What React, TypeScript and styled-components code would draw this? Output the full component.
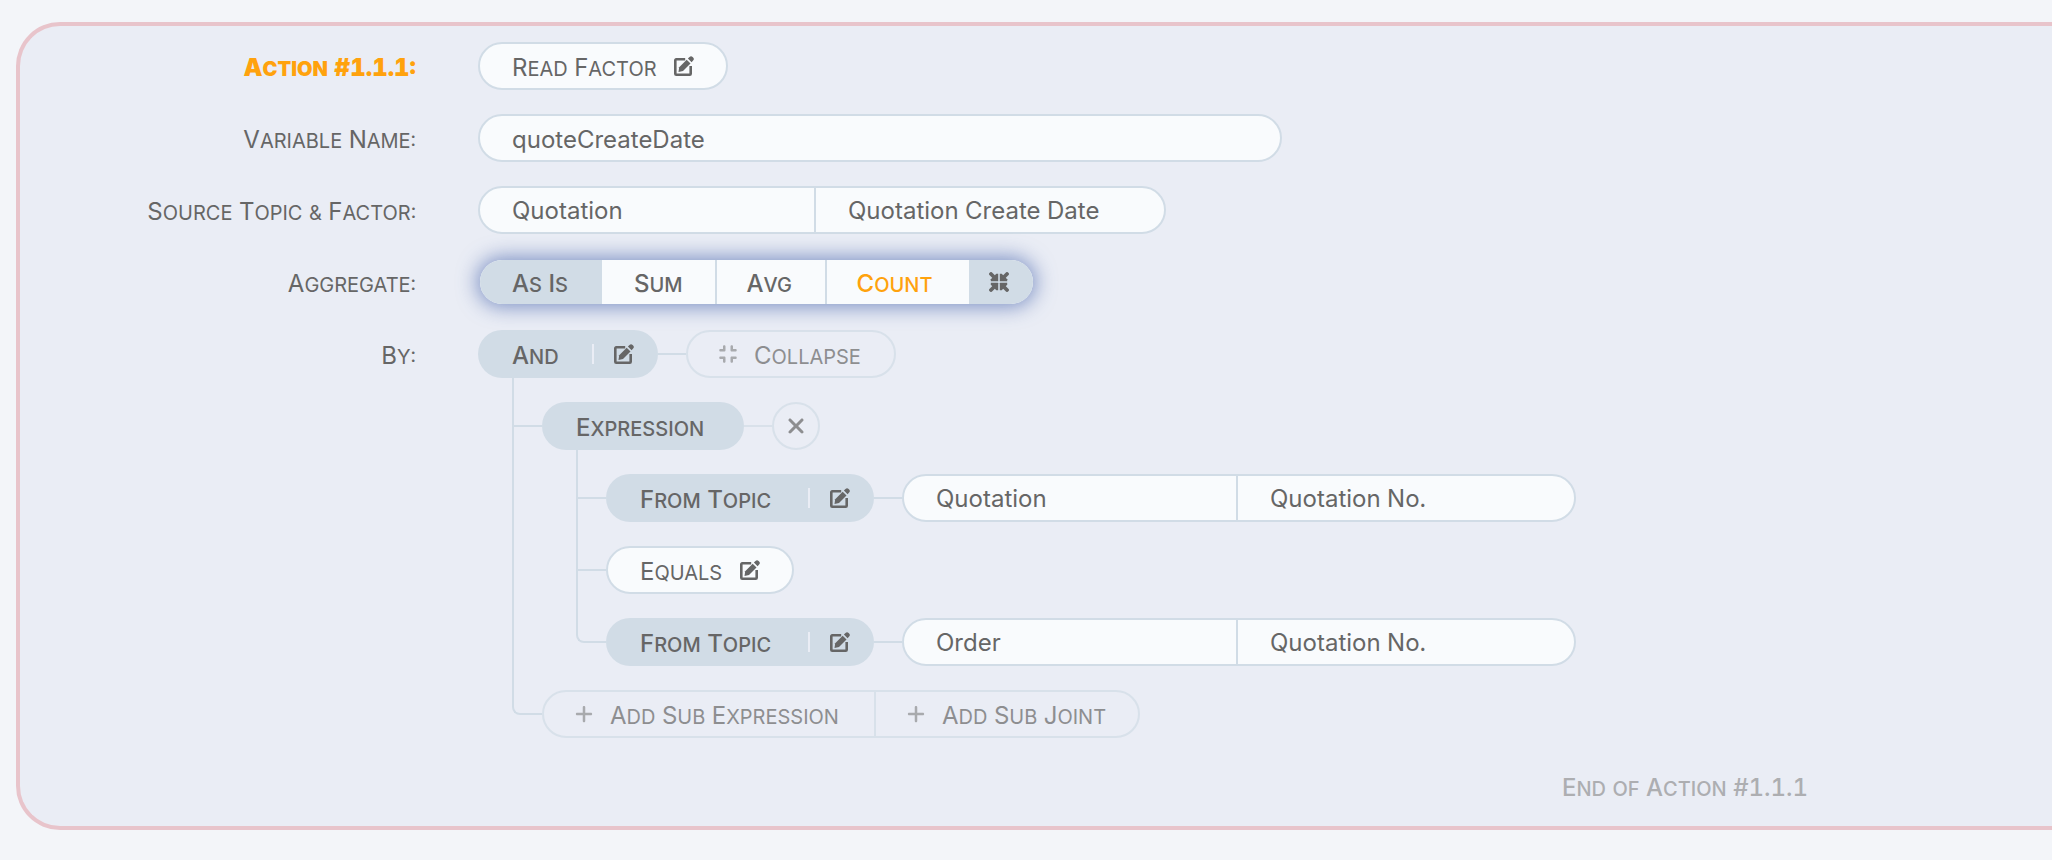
import React from 'react';
import styled, { createGlobalStyle, css } from 'styled-components';
import { FaCompress, FaPlus, FaXmark } from 'react-icons/fa6';

const line = '#d1dce6';
const ink = '#666666';
const amber = '#ffa20d';
const field = '#f9fbfd';

const GlobalStyle = createGlobalStyle`
  *, *::before, *::after { box-sizing: border-box; }
  body {
    margin: 0;
    background: #f3f5f9;
    color: ${ink};
    font-family: Inter, "Liberation Sans", sans-serif;
    font-size: 24px;
    line-height: 28px;
    font-variant-numeric: tabular-nums;
  }
  button, input { font: inherit; color: inherit; }
  button { cursor: pointer; }
`;

const Card = styled.section`
  margin: 22px 0 30px 16px;
  padding: 16px 0;
  border: 4px solid #e8c4cb;
  border-right: 0;
  border-radius: 44px 0 0 44px;
  background: #eaedf5;
`;

const Form = styled.div`
  display: grid;
  grid-template-columns: 396px minmax(0, 1fr);
  column-gap: 62px;
  row-gap: 24px;
  max-width: 1788px;
`;

const Label = styled.label<{ $lead?: boolean }>`
  display: flex;
  align-items: center;
  justify-content: flex-end;
  height: 48px;
  ${p => p.$lead && css`color: ${amber}; font-weight: 900;`}
`;

const Line = styled.div`
  display: flex;
  align-items: center;
  height: 48px;
`;

const CapsText = styled.span`
  padding-top: 4px;
  white-space: nowrap;
`;

const Word = styled.span<{ $initial: boolean }>`
  display: inline-block;
  font-size: 20px;
  text-transform: uppercase;
  ${p => p.$initial && css`&::first-letter { font-size: 24px; }`}
`;

/* Small capitals: every word is set small, its capital initial at full size. */
const Caps = ({ children }: { children: string }) => (
  <CapsText>
    {children.split(' ').map((word, i) => (
      <React.Fragment key={i}>
        {i > 0 && ' '}
        {word.startsWith('#') ? word : <Word $initial={/^[A-Z]/.test(word)}>{word}</Word>}
      </React.Fragment>
    ))}
  </CapsText>
);

const EditIcon = () => (
  <svg width="20" height="20" viewBox="0 0 20 20" fill="currentColor" aria-hidden="true">
    <path
      d="M11.2 3.3H2.2a.9.9 0 0 0-.9.9V17.800a.9.9 0 0 0 .9.9H15.800a.9.9 0 0 0 .9-.9V10"
      fill="none"
      stroke="currentColor"
      strokeWidth="2.600"
    />
    <path d="M4.500 15.900L5.200 11.200L12.700 3.700L16.500 7.500L9 15Z" />
    <path d="M13.900 2.500L15.500.9a2.200 2.200 0 0 1 3.100 0l.5.5a2.200 2.200 0 0 1 0 3.100L17.600 6.200Z" />
  </svg>
);

const ShrinkIcon = () => (
  <svg width="20" height="20" viewBox="0 0 20 20" fill="currentColor" aria-hidden="true">
    {[0, 90, 180, 270].map(angle => (
      <g key={angle} transform={`rotate(${angle} 10 10)`}>
        <path d="M9.200 1.800V8.700a.5.5 0 0 1-.5.5H1.800V7.300L7.300 1.800Z" />
        <path d="M2 2L6 6" stroke="currentColor" strokeWidth="3.800" strokeLinecap="round" />
      </g>
    ))}
  </svg>
);

const PillButton = styled.button<{ $width: number }>`
  display: flex;
  align-items: center;
  justify-content: space-between;
  gap: 16px;
  min-width: ${p => p.$width}px;
  height: 48px;
  padding: 0 32px;
  border: 2px solid ${line};
  border-radius: 24px;
  background: ${field};
`;

const GhostGroup = styled.div`
  display: flex;
  height: 48px;
  border: 2px solid ${line};
  border-radius: 24px;
  opacity: 0.7;
`;

const GhostButton = styled.button<{ $width: number }>`
  display: flex;
  align-items: center;
  gap: 16px;
  min-width: ${p => p.$width}px;
  padding: 0 30px;
  border: 0;
  background: none;
  & + & { border-left: 2px solid ${line}; }
  svg { opacity: 0.7; }
`;

const RoundButton = styled.button`
  display: flex;
  align-items: center;
  justify-content: center;
  width: 48px;
  height: 48px;
  padding: 0;
  border: 2px solid ${line};
  border-radius: 24px;
  background: none;
  opacity: 0.7;
`;

const SolidPill = styled.div<{ $width: number }>`
  display: flex;
  align-items: center;
  justify-content: space-between;
  min-width: ${p => p.$width}px;
  height: 48px;
  padding: 0 2px 0 34px;
  border-radius: 24px;
  background: ${line};
  font-weight: 500;
`;

const SolidName = styled.span`
  display: flex;
  padding-right: 32px;
`;

const EditButton = styled.button`
  display: flex;
  align-items: center;
  height: 20px;
  padding: 0 22px 0 20px;
  border: 0;
  border-left: 2px solid #eaedf5;
  background: none;
`;

const Link = styled.span<{ $faint?: boolean }>`
  width: 28px;
  height: 2px;
  background: ${line};
  opacity: ${p => (p.$faint ? 0.7 : 1)};
`;

const NameInput = styled.input`
  width: 804px;
  height: 48px;
  padding: 2px 32px 0;
  border: 2px solid ${line};
  border-radius: 24px;
  background: ${field};
`;

const Pair = styled.div`
  display: flex;
  height: 48px;
  border: 2px solid ${line};
  border-radius: 24px;
  background: ${field};
  overflow: hidden;
`;

const PairInput = styled.input<{ $width: number }>`
  width: ${p => p.$width}px;
  padding: 2px 32px 0;
  border: 0;
  background: none;
  & + & { border-left: 2px solid ${line}; }
`;

const Segments = styled.div`
  display: flex;
  height: 44px;
  margin: 2px;
  border-radius: 22px;
  background: ${field};
  box-shadow: 0 0 20px 3px rgba(70, 98, 172, 0.66);
`;

const Segment = styled.button<{ $width: number; $on?: boolean; $hot?: boolean }>`
  display: flex;
  align-items: center;
  min-width: ${p => p.$width}px;
  padding: 0 32px;
  border: 0;
  background: ${p => (p.$on ? line : 'none')};
  color: ${p => (p.$hot ? amber : ink)};
  font-weight: 500;
  &:first-child { border-radius: 22px 0 0 22px; }
  &:nth-child(3), &:nth-child(4) { padding: 0 30px; border-left: 2px solid ${line}; }
  &:last-child { padding: 0 24px 0 20px; border-radius: 0 22px 22px 0; }
`;

const Branches = styled.ul`
  list-style: none;
  margin: 0;
  padding: 0 0 0 64px;
`;

const Branch = styled.li`
  position: relative;
  padding-top: 24px;
  &::before {
    content: '';
    position: absolute;
    top: 0;
    left: -30px;
    width: 30px;
    height: 49px;
    border-bottom: 2px solid ${line};
    border-left: 2px solid ${line};
  }
  &:last-child::before { border-bottom-left-radius: 8px; }
  &:not(:last-child)::after {
    content: '';
    position: absolute;
    top: 0;
    bottom: 0;
    left: -30px;
    width: 2px;
    background: ${line};
  }
`;

const Ending = styled(Line)`
  grid-column: 1 / -1;
  justify-content: flex-end;
  font-weight: 500;
  color: #adaeb1;
`;

const TopicSource = ({ topic, factor }: { topic: string; factor: string }) => (
  <Line>
    <SolidPill $width={268}>
      <SolidName><Caps>From Topic</Caps></SolidName>
      <EditButton aria-label="Change source"><EditIcon /></EditButton>
    </SolidPill>
    <Link />
    <Pair>
      <PairInput $width={332} aria-label="Topic" defaultValue={topic} />
      <PairInput $width={338} aria-label="Factor" defaultValue={factor} />
    </Pair>
  </Line>
);

export default function App() {
  return (
    <>
      <GlobalStyle />
      <Card>
        <Form>
          <Label $lead htmlFor="action"><Caps>Action #1.1.1:</Caps></Label>
          <Line>
            <PillButton $width={250} id="action"><Caps>Read Factor</Caps><EditIcon /></PillButton>
          </Line>

          <Label htmlFor="variable"><Caps>Variable Name:</Caps></Label>
          <Line><NameInput id="variable" defaultValue="quoteCreateDate" /></Line>

          <Label htmlFor="topic"><Caps>{'Source Topic & Factor:'}</Caps></Label>
          <Line>
            <Pair>
              <PairInput $width={334} id="topic" defaultValue="Quotation" />
              <PairInput $width={350} aria-label="Factor" defaultValue="Quotation Create Date" />
            </Pair>
          </Line>

          <Label as="div" id="aggregate"><Caps>Aggregate:</Caps></Label>
          <Line>
            <Segments role="group" aria-labelledby="aggregate">
              <Segment $width={122} $on><Caps>As Is</Caps></Segment>
              <Segment $width={112}><Caps>Sum</Caps></Segment>
              <Segment $width={110}><Caps>Avg</Caps></Segment>
              <Segment $width={144} $hot><Caps>Count</Caps></Segment>
              <Segment $width={64} $on aria-label="Shrink"><ShrinkIcon /></Segment>
            </Segments>
          </Line>

          <Label as="div"><Caps>By:</Caps></Label>
          <div>
            <Line>
              <SolidPill $width={180}>
                <SolidName><Caps>And</Caps></SolidName>
                <EditButton aria-label="Change joint"><EditIcon /></EditButton>
              </SolidPill>
              <Link />
              <GhostGroup>
                <GhostButton $width={206}><FaCompress size={20} /><Caps>Collapse</Caps></GhostButton>
              </GhostGroup>
            </Line>
            <Branches>
              <Branch>
                <Line>
                  <SolidPill $width={202}><SolidName><Caps>Expression</Caps></SolidName></SolidPill>
                  <Link $faint />
                  <RoundButton aria-label="Remove expression"><FaXmark size={24} /></RoundButton>
                </Line>
                <Branches>
                  <Branch><TopicSource topic="Quotation" factor="Quotation No." /></Branch>
                  <Branch>
                    <Line>
                      <PillButton $width={188}><Caps>Equals</Caps><EditIcon /></PillButton>
                    </Line>
                  </Branch>
                  <Branch><TopicSource topic="Order" factor="Quotation No." /></Branch>
                </Branches>
              </Branch>
              <Branch>
                <Line>
                  <GhostGroup>
                    <GhostButton $width={330}><FaPlus size={20} /><Caps>Add Sub Expression</Caps></GhostButton>
                    <GhostButton $width={264}><FaPlus size={20} /><Caps>Add Sub Joint</Caps></GhostButton>
                  </GhostGroup>
                </Line>
              </Branch>
            </Branches>
          </div>

          <Ending><Caps>End of Action #1.1.1</Caps></Ending>
        </Form>
      </Card>
    </>
  );
}
